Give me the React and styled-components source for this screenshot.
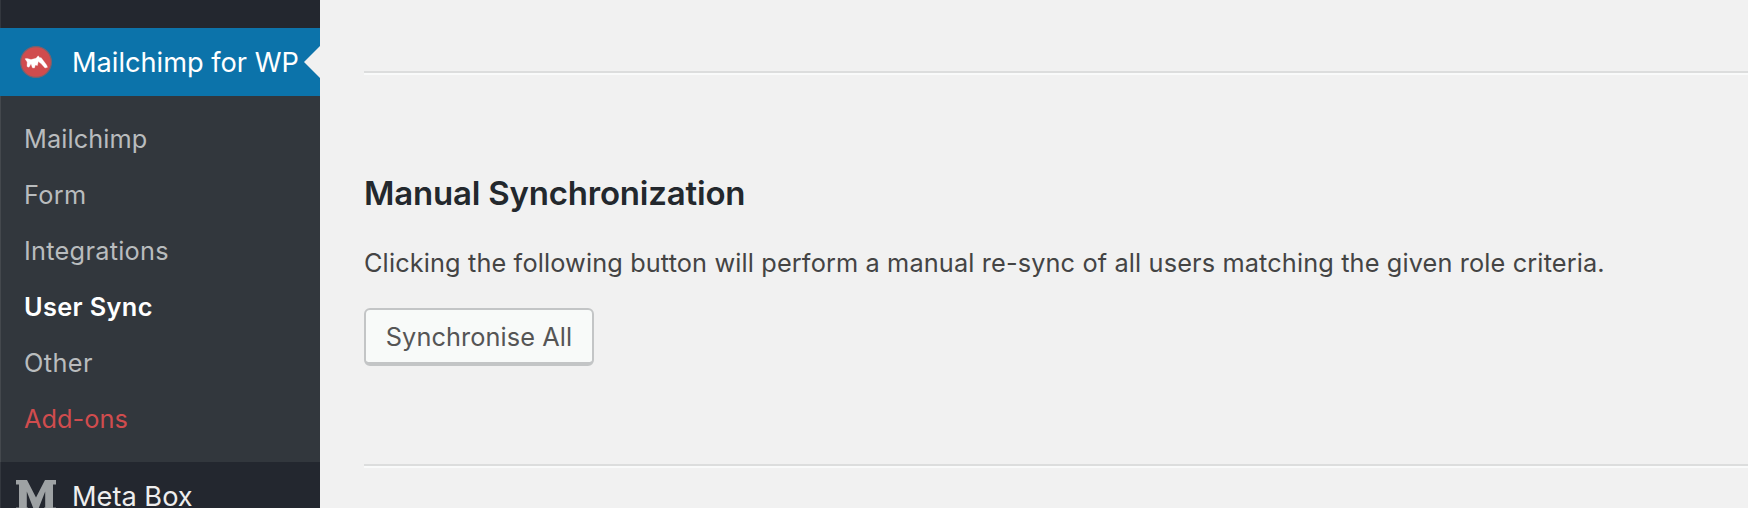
import React from 'react';
import styled, { createGlobalStyle } from 'styled-components';

const Global = createGlobalStyle`
  * { box-sizing: border-box; }
  html, body { margin: 0; background: #f1f1f1; }
  body { font-family: Inter, "Liberation Sans", sans-serif; overflow: hidden; }
`;

const Page = styled.div`
  display: flex;
  width: 100%;
  height: 508px;
  overflow: hidden;
`;

const Sidebar = styled.nav`
  flex: 0 0 320px;
  height: 508px;
  padding-top: 28px;
  background: #23272f;
  box-shadow: inset 1px 0 #33373e;
  overflow: hidden;
`;

const MenuItem = styled.a`
  position: relative;
  display: flex;
  align-items: center;
  height: 68px;
  color: ${(p) => (p.$current ? '#fff' : '#eee')};
  background: ${(p) => (p.$current ? '#0c73aa' : 'transparent')};
  font-size: 27.2px;
  white-space: nowrap;
`;

const IconSlot = styled.span`
  display: flex;
  justify-content: center;
  flex: 0 0 72px;
`;

const Arrow = styled.span`
  position: absolute;
  right: 0;
  top: 18px;
  border: 16px solid transparent;
  border-left-width: 0;
  border-right-color: #f1f1f1;
`;

const Submenu = styled.ul`
  list-style: none;
  margin: 0;
  height: 366px;
  padding: 15px 0 0 24px;
  background: #32373d;
  box-shadow: inset 1px 0 #44484d;
`;

const SubItem = styled.li`
  height: 56px;
  line-height: 56px;
  font-size: 25.3px;
  color: ${(p) => p.$color || '#b9bcbe'};
  font-weight: ${(p) => (p.$current ? 600 : 400)};
  letter-spacing: ${(p) => p.$track}px;
`;

const Content = styled.main`
  flex: 1;
  padding: 71px 0 0 44px;
  color: #444;
`;

const Divider = styled.hr`
  height: 4px;
  margin: 0;
  border: 0;
  border-top: 2px solid #dcdddd;
  border-bottom: 2px solid #f9fafa;
`;

const Section = styled.section`
  height: 389px;
  padding-top: 98px;
`;

const Heading = styled.h2`
  margin: 0;
  height: 40px;
  line-height: 40px;
  font-size: 33px;
  font-weight: 600;
  color: #23282d;
  letter-spacing: -0.2px;
`;

const Text = styled.p`
  margin: 30px 0 0;
  height: 40px;
  line-height: 40px;
  font-size: 25.3px;
  letter-spacing: 0.135px;
  white-space: nowrap;
`;

const Button = styled.button`
  display: block;
  width: 230px;
  height: 58px;
  margin-top: 25px;
  padding: 0;
  border: 2px solid #c3c5c6;
  border-bottom-width: 4px;
  border-radius: 6px;
  background: #f8faf9;
  color: #555;
  font: 25.3px Inter, "Liberation Sans", sans-serif;
  letter-spacing: 0.09px;
  white-space: nowrap;
`;

const items = [
  { label: 'Mailchimp', track: 0.1 },
  { label: 'Form', track: 0.3 },
  { label: 'Integrations', track: 0.27 },
  { label: 'User Sync', track: 0.37, current: true, color: '#fff' },
  { label: 'Other', track: 0.4 },
  { label: 'Add-ons', track: 0.05, color: '#d04c4e' },
];

const MailchimpIcon = () => (
  <svg width="32" height="32" viewBox="0 0 32 32">
    <circle cx="16" cy="16" r="15.4" fill="#d04c4e" stroke="#75636f" strokeWidth="1.2" />
    <path
      d="M5 12.8 L7.2 16 L7 20.5 L9 21.3 L11 17.8 L12.4 21.8 L14.4 22 L15.4 19 L17.4 19.6 L18.3 15.6 L21 17.6 L25 22 L27.5 21.3 L26.6 19 L21 11.5 L20 12 L18.2 9.8 L16 12.3 L11 13.6 L7 12.4 Z"
      fill="#fff"
      stroke="#fff"
      strokeOpacity="0.4"
      strokeWidth="0.8"
      strokeLinejoin="round"
    />
  </svg>
);

const MetaBoxIcon = () => (
  <svg width="40" height="32" viewBox="0 0 40 32">
    <path
      d="M0 0 H11 L20 17.5 L29 0 H40 V4.5 H37 V27.5 H40 V32 H28 V27.5 H29.2 V11.5 L22.4 29 H17.6 L10.8 11.5 V27.5 H12 V32 H0 V27.5 H3 V4.5 H0 Z"
      fill="#9ea2a4"
    />
  </svg>
);

export default function App() {
  return (
    <>
      <Global />
      <Page>
        <Sidebar>
          <MenuItem $current>
            <IconSlot><MailchimpIcon /></IconSlot>
            Mailchimp for WP
            <Arrow />
          </MenuItem>
          <Submenu>
            {items.map((i) => (
              <SubItem key={i.label} $track={i.track} $current={i.current} $color={i.color}>
                {i.label}
              </SubItem>
            ))}
          </Submenu>
          <MenuItem>
            <IconSlot><MetaBoxIcon /></IconSlot>
            Meta Box
          </MenuItem>
        </Sidebar>
        <Content>
          <Divider />
          <Section>
            <Heading>Manual Synchronization</Heading>
            <Text>Clicking the following button will perform a manual re-sync of all users matching the given role criteria.</Text>
            <Button>Synchronise All</Button>
          </Section>
          <Divider />
        </Content>
      </Page>
    </>
  );
}
